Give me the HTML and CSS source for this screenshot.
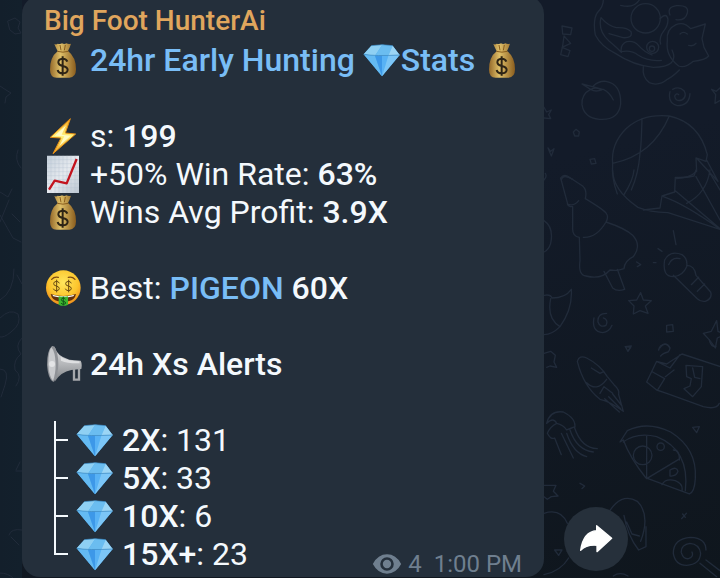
FILE: index.html
```
<!DOCTYPE html>
<html lang="en">
<head>
  <meta charset="UTF-8">
  <meta name="viewport" content="width=device-width, initial-scale=1.0">
  <title>Big Foot HunterAi</title>
  <link rel="stylesheet" href="styles.css">
</head>
<body>

  <!-- Icons -->
  <svg class="sprite" aria-hidden="true">
    <defs>
      <linearGradient id="gold" x1="0" x2="1"><stop offset="0" stop-color="#94692a"/><stop offset=".4" stop-color="#dfc069"/><stop offset="1" stop-color="#8a5d1e"/></linearGradient>
      <linearGradient id="boltFill" x1="0" y1="0" x2="0" y2="1"><stop offset="0" stop-color="#f6a81c"/><stop offset=".5" stop-color="#fff27a"/><stop offset="1" stop-color="#f3a01a"/></linearGradient>
      <linearGradient id="paper" x1="0" y1="0" x2="1" y2="1"><stop offset="0" stop-color="#c4cfda"/><stop offset=".5" stop-color="#e6eaef"/><stop offset="1" stop-color="#bdc7d2"/></linearGradient>
      <radialGradient id="faceFill" cx=".5" cy=".35" r=".65"><stop offset="0" stop-color="#ffe65c"/><stop offset=".65" stop-color="#fcc52d"/><stop offset="1" stop-color="#ef8e1c"/></radialGradient>
      <linearGradient id="metal" x1="0" y1="0" x2="0" y2="1"><stop offset="0" stop-color="#d9dadc"/><stop offset=".5" stop-color="#b5b7ba"/><stop offset="1" stop-color="#7f8286"/></linearGradient>
    </defs>

    <symbol id="bag" viewBox="0 0 114 114">
      <path fill="url(#gold)" d="M31 9q6 3 10-1 8 3 13-1 7 4 13 0 7 4 14 1-4 12-9 22 24 18 24 55 0 24-20 25H38q-20-1-20-24 0-38 23-55Q35 19 31 9z"/>
      <path fill="none" stroke="#8a5d1c" stroke-width="3" d="M40 31q17 5 33 0M48 12l3 16M64 12l-3 16"/>
      <path fill="none" stroke="#2d2415" stroke-width="6" d="M70 62q-3-9-14-9-13 1-13 11 0 8 13 11 15 3 15 12-1 10-15 10-13 0-15-10M56 46v58"/>
    </symbol>

    <symbol id="bolt" viewBox="0 0 114 114">
      <path fill="url(#boltFill)" stroke="#e48d15" stroke-width="3" stroke-linejoin="round" d="M79 5 19 61l32 2-24 47 68-59-31-3z"/>
      <path fill="#fffbc4" d="M66 25 32 56l29 2-15 29 34-31-27-3z"/>
    </symbol>

    <symbol id="chart" viewBox="0 0 114 114">
      <path fill="url(#paper)" d="M9 2h96v112H9z"/>
      <path fill="none" stroke="#b4c0cd" stroke-width="1" d="M21 2v112M33 2v112M45 2v112M57 2v112M69 2v112M81 2v112M93 2v112M9 14h96M9 26h96M9 38h96M9 50h96M9 62h96M9 74h96M9 86h96M9 98h96"/>
      <path fill="none" stroke="#c3141f" stroke-width="7" stroke-linejoin="round" d="M15 104 32 77l36 8L98 12"/>
    </symbol>

    <symbol id="face" viewBox="0 0 114 114">
      <circle cx="58" cy="56" r="52" fill="url(#faceFill)"/>
      <path fill="none" stroke="#7d4a12" stroke-width="4" stroke-linecap="round" d="M23 31q8-9 20-6M73 25q12-3 20 6"/>
      <path fill="#63300d" d="M20 75q38 12 76 0-3 17-22 22H42q-19-5-22-22z"/>
      <path fill="#fff" d="M25 77q33 9 66 0l-3 5q-30 8-60 0z"/>
      <path fill="#3cb52e" d="M44 82q14 3 28 0v25q-14 7-28 0z"/>
      <g fill="none" stroke="#6a4a10" stroke-width="3">
        <path d="M46 43q-2-6-9-6-8 1-8 7t8 7q9 2 9 8-1 6-9 6-7 0-9-6M38 32v38"/>
        <path d="M82 43q-2-6-9-6-8 1-8 7t8 7q9 2 9 8-1 6-9 6-7 0-9-6M74 32v38"/>
        <path stroke="#11561a" d="M64 91q-2-4-6-4-6 1-6 5t6 5q7 1 7 5-1 4-7 4-5 0-7-4M58 83v26"/>
      </g>
    </symbol>

    <symbol id="horn" viewBox="0 0 114 114">
      <path fill="none" stroke="#a5a8ac" stroke-width="7" d="M90 68v36h15V52"/>
      <path fill="url(#metal)" d="M31 4q7 30 45 40l34 3q5 8 2 25l-30 3q-32 6-50 35z"/>
      <path fill="#8f9297" d="M24 3q10-3 16 24 6 30 0 57-4 20-12 27Q12 103 9 60 9 16 24 3z"/>
      <path fill="#c9cbce" d="M22 7q-9 12-9 50 1 36 14 50 8-20 8-49Q34 20 22 7z"/>
      <circle cx="24" cy="57" r="9" fill="#e3e4e6"/>
      <path fill="#dedfe1" d="M50 35q18 12 56 14l1 6q-36 1-56-8z"/>
    </symbol>

    <symbol id="diamond" viewBox="0 0 114 114">
      <path fill="#4daef2" d="M25 14 58 11l31 3 21 28-53 64L2 40z"/>
      <path fill="#8fd0f3" d="M25 14 58 11 36 44 2 40z"/>
      <path fill="#6bbdf0" d="M58 11l31 3-13 30H36z"/>
      <path fill="#9bd5f5" d="M89 14l21 28-34 2z"/>
      <path fill="#64baf2" d="M2 40l34 4 21 62z"/>
      <path fill="#3d98e8" d="M36 44h21v62z"/>
      <path fill="#58b2f5" d="M57 44h19l-19 62z"/>
      <path fill="#7cc6f7" d="M76 44l34-2-53 64z"/>
      <path fill="none" stroke="#3d87bd" stroke-width="2" d="M2 40q34 6 108 2M25 14 58 11l31 3"/>
    </symbol>
  </svg>

  <!-- Wallpaper -->
  <svg class="wallpaper" viewBox="0 0 720 578" preserveAspectRatio="xMaxYMin slice" aria-hidden="true">
    <g transform="translate(540 0) scale(.3333)">
      <path d="M190 0Q190 20 172 38 158 60 166 105 184 140 226 160 280 196 340 202 420 200 396 150M183 53q-10 40 24 70 24 20 37 34M183 53q20 24 46 30 32-2 44 12 6 20-24 18l-42-12M244 157q-4-24 16-32 22-4 36 12 18 20 40 28M244 155q30-6 50 10 30 20 70 16M242 16q40 10 56-16"/>
      <circle cx="317" cy="55" r="44"/>
      <path d="M360 56q20-20 24 2 0 20-12 34-16 20-10 40M390 45q-10-24 20-28 38-2 32 22-6 24-34 20M382 122q-4-34 26-48 24-10 44 12l44-14-10 44 6 26 14 26q-10 12-46 16-26 22-44 14-40-30-34-76M420 102q10-10 22 0M446 136q14 4 22-6M418 210q-20 20-36 28-26 22-54 10-22-16-18-48"/>
      <circle cx="338" cy="142" r="18"/><circle cx="336" cy="146" r="8"/>
      <path d="M66 78l30 6-4 20-24-2zM72 108l20 22-26 12 24 10-6 18-22-6 6-26z"/>
      <path d="M184 270q-14-10-32-2-28 14-26 46 6 40 52 44 58 4 64-46 2-60-44-68-22-2-38 14M126 252l40 10 22 6q-20 10-36 0zM190 268q20 10 30 32"/>
      <path d="M390 275q-8 34 22 42 36 0 38-36M398 268q20-10 34 4 10 18-6 28-20 6-22-12 6-10 12-4M515 268l14 6 20-18M515 268l12 16-2 26 18-10"/>
      <path d="M218 492q-6-60 40-106 50-46 130-38 90 20 114 116l-4 20-30-10 2 40q-20 20-60 22M218 492q-4 40 14 90M218 490q120-24 170-142M306 356q-2 80-6 104-4 60-26 110M470 475l60 65M500 480l34 64"/>
      <path d="M12 322l8 14 14-6-8 14 6 12-20-2M100 396l8-8 10 8-2 12h-12zM24 444l8 10 10-8-8 22zM150 478l14-2 4 14-14 2zM64 540q4-20 34-2"/>
    </g>
    <g transform="translate(540 170) scale(.3333)">
      <path d="M62 24q8-12 20-6l46 30q14 12 8 38 60 36 64 46 6 10-2 24 60 20 80 40 28 30 2 64-26 12-28 36-20 8-42 4-26 30-72 18-24-2-18-46l-2-70q-22-2-20-30V110q-16 0-16-12zM82 102q20 8 34-10M130 202q40 2 68-46M192 304l26 50q14 12 36 4l-22-60"/>
      <path d="M218 0q0 60 76 112 34 14 90 16l156 50M252 74Q280 30 282 0M310 120l50-6 6-36 38-12 2-44q30 2 56-4l6-18M370 80q60 20 168 96M406 62l134 114M468 20l72 130M440 100q60-30 70-100M504 0l36 60"/>
      <path d="M374 270q16-30 52-16 18 12 14 36-12 28-40 30-34 0-26-50zM386 284q10-24 34-18M440 286q24 0 28 30l44 50q6 20-16 28-14 2-24-8l-72-70M454 344l22-22M472 364l22-22M400 182l8 42M354 236l12 8M290 276l12 8-10 6M340 278h8"/>
      <path d="M302 368l8 22 24 2-18 16 8 22-24-8-20 10 2-24-16-16 24-2zM190 444q16 6 8 22-18 8-24-10-2-26 26-26M162 444q-8 40 26 44 20-2 28-22M490 490l24-6 16-32 4 32 20 10-22 10-6 30-16-22zM380 466l18-2 2 20-20 2zM256 530l18-2-8 12M360 534q16-24 30 0"/>
      <path d="M12 152q30 20 20 68-6 20-20 26M12 376q20-4 24 8 40 0 58-26 4 60-34 112-24 24-48 24M32 386q-12 60 28 84M12 30q10-10 4-20"/>
    </g>
    <g transform="translate(540 340) scale(.3333)">
      <path d="M112 64q6-20 28-10 40 20 62 56l20 24q18 16 14 30l14 50q-40-30-70-36-50-40-68-114zM140 128q30 30 60-10M180 160l12-20 26 20M194 176l44 40M206 170l36 36M218 162l28 36M154 84l26 16 12-6M12 40l20-6 14 12-4 20 8 16-20-4-10 4"/>
      <path d="M426 42l134 44M426 42l-46 30-30-8-30 62 30 24 30 10 110 40q40 10 48-10M350 64l40 20 30-40M338 96l36 20-20 32M376 110l26-20M356 30q4-20 26-16 14 10 2 22-16 4-22 12M438 76l50 4-4 60-26 30-26-24 18-8 4-22-14-6zM458 84l6 28 16 4M508 0q4 20 20 20M256 20l16 2-8 12z"/>
      <path d="M20 250q10-40 50-34 40 20 34 48 20 60 68 62M20 250q20-20 30 0-20 10-28 30 10 20 22 14l20 50M50 250q20 4 30 20 30-12 24-10M64 280l36 74M80 280q20 60 60 70M90 270q20 60 70 66"/>
      <path d="M240 306l22-34q60-30 130 4 80 50 74 140-2 40-18 46l-130-48q-48-60-68-114zM250 306q40-30 100-16 100 40 86 162M320 288v128l96-58"/>
      <circle cx="308" cy="346" r="28"/><circle cx="362" cy="320" r="11"/>
      <path d="M400 330q20 0 18 30M390 390q20-12 24 4-6 16-24 14zM366 434q10-20 40-12 24 10 20 30M458 262l20-2-8 18zM12 436h36l-8 18 14 14-20 2-12 8-10-8M12 520q50-16 70 30M120 430l14 8-8 8M202 524q40-70 90-40 40 40 10 120M425 536l14-16"/>
    </g>
    <g transform="translate(360 500) scale(.3333)">
      <path d="M792 46q10 60 44 104l22-10V80M800 66l16 36 22 6M584 150h22l-10 16zM552 224q50-10 74-50M968 42l8 10M1038 150q0-36-46-38-52 4-52 48 6 36 40 36 40-2 42-36-4-28-32-30-28 4-26 28 6 20 22 18 16-6 10-20M1020 190l50 40M1038 180l42 32M760 228q20-14 44 0"/>
    </g>
    <path d="M8 21l7-3 5 4-2 6 3 5-6 1-5-4zM0 86l6 4 5 3-5 4-1 6M18 150q-4 10 3 18M0 215l13 23 8 4M0 222l9-22M12 214l8 8M0 300q14-8 14-31M17 275l5 9M0 318q10-10 18-4 4 10-7 18-7 6-11 5M22 338q-8 8-1 16-8 6-6 16 8 6 1 16M0 369q10 0 5 16l-4 12M16 470l4-8M16 471h6M9 535q2-7 13-5M11 537l8 8M0 573q8 0 13 5M0 192l8 5 4-8"/>
  </svg>

  <main class="chat">
    <article class="bubble">
      <h2 class="sender">Big Foot HunterAi</h2>

      <div class="message">
        <p><svg class="icon"><use href="#bag"/></svg> <a href="#">24hr Early Hunting</a> <svg class="icon"><use href="#diamond"/></svg><a href="#">Stats</a> <svg class="icon"><use href="#bag"/></svg></p>

        <p>
          <svg class="icon"><use href="#bolt"/></svg> s: <b>199</b><br>
          <svg class="icon"><use href="#chart"/></svg> +50% Win Rate: <b>63%</b><br>
          <svg class="icon"><use href="#bag"/></svg> Wins Avg Profit: <b>3.9X</b>
        </p>

        <p><svg class="icon"><use href="#face"/></svg> Best: <a href="#">PIGEON</a> <b>60X</b></p>

        <p><svg class="icon"><use href="#horn"/></svg> <b>24h Xs Alerts</b></p>

        <div class="last">
          <ul class="tree">
            <li><svg class="icon"><use href="#diamond"/></svg><b>2X</b>: 131</li>
            <li><svg class="icon"><use href="#diamond"/></svg><b>5X</b>: 33</li>
            <li><svg class="icon"><use href="#diamond"/></svg><b>10X</b>: 6</li>
            <li><svg class="icon"><use href="#diamond"/></svg><b>15X+</b>: 23</li>
          </ul>
          <div class="meta">
            <svg class="eye" viewBox="38 157 88 62" aria-label="Views">
              <path fill="currentColor" fill-rule="evenodd" d="M38 188q16-30 44-30t44 30q-16 30-44 30t-44-30zM82 167a21 21 0 1 0 0 42 21 21 0 0 0 0-42z"/>
              <circle cx="82" cy="188" r="13" fill="currentColor"/>
            </svg>
            <span>4</span>
            <time datetime="13:00">1:00 PM</time>
          </div>
        </div>
      </div>
    </article>

    <button type="button" class="share" aria-label="Forward">
      <svg viewBox="612 21 192 192">
        <path d="M662 151q8-56 48-59V77l45 38-44 40v-19q-31-3-49 15z"/>
      </svg>
    </button>
  </main>

</body>
</html>
```
FILE: styles.css
```
:root{
  --bubble:#242f3b;
  --text:#f4f9fd;
  --link:#79bdf6;
  --name:#e0a65d;
  --muted:#6f7f8f;
}
*{margin:0;padding:0;box-sizing:border-box;}
body{
  background:linear-gradient(90deg,#131f2b 0,#13202c 22px,transparent 22px),linear-gradient(165deg,#131b29 40%,#0f161d);
  color:var(--text);
  font-family:Roboto,"Liberation Sans",sans-serif;
  min-height:100vh;
  overflow:hidden;
}
a{color:var(--link);font-weight:500;text-decoration:none;}
b{font-weight:500;}

.sprite{position:absolute;width:0;height:0;}

/* Wallpaper */
.wallpaper{position:absolute;inset:0;width:100%;height:100%;z-index:-1;}
.wallpaper path,.wallpaper circle{fill:none;stroke:#212b3a;stroke-width:4;stroke-linejoin:round;stroke-linecap:round;}
.wallpaper > path{stroke-width:1;}

/* Chat */
.chat{display:flex;align-items:flex-end;gap:20px;padding:0 92px 0 22px;}
.bubble{flex:1;margin-top:-4px;padding:4px 22px 0;background:var(--bubble);border-radius:18px;}
.sender{color:var(--name);font-size:28px;font-weight:500;line-height:41px;}
.message{font-size:32px;line-height:38px;white-space:nowrap;}
.message p{margin-bottom:38px;}
.icon{width:38px;height:38px;vertical-align:top;}

/* Alerts */
.last{display:flex;justify-content:space-between;align-items:flex-end;}
.tree{list-style:none;padding-bottom:4px;}
.tree li{display:flex;align-items:center;white-space:pre;}
.tree li::before{content:'';width:12px;height:38px;margin:0 8px 0 10px;
                 background:linear-gradient(var(--text),var(--text)) 0 18px/12px 2px no-repeat;
                 border-left:2px solid var(--text);}
.tree li:last-child::before{height:20px;align-self:flex-start;}
.tree .icon{margin-right:8px;}

.meta{display:flex;align-items:center;color:var(--muted);font-size:24px;line-height:26px;}
.meta time{margin-left:12px;}
.eye{width:30px;height:20px;margin-right:6px;}

.share{width:64px;height:64px;margin-bottom:6px;border:0;border-radius:50%;background:#26303b;cursor:pointer;}
.share svg{display:block;width:64px;height:64px;}
.share path{fill:#fff;stroke:#fff;stroke-width:4;stroke-linejoin:round;}
```
